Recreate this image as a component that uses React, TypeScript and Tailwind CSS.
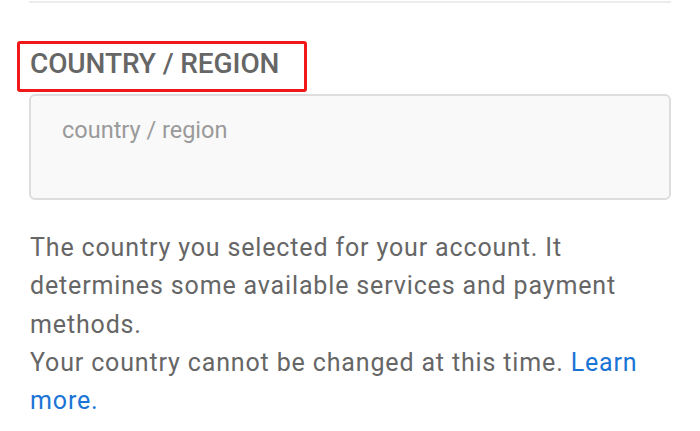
import React from 'react';

export default function App() {
  return (
    <div className="w-[700px] h-[431px] bg-white overflow-hidden" style={{ fontFamily: 'Roboto, "Liberation Sans", sans-serif' }}>
      <div className="mx-[29px] border-t-2 border-[#ececec] mt-[1px]" />
      <div className="ml-[17px] mt-[38px] w-[290px] h-[51px] border-[3px] border-[#f01818] rounded-[3px] pl-[10px] pt-[6px]">
        <h2 className="text-[28px] font-medium text-[#666666] leading-none tracking-[-0.1px]">COUNTRY / REGION</h2>
      </div>
      <div className="mx-[29px] mt-[2px] h-[106px] bg-[#f9f9f9] border-2 border-[#dddddd] rounded-[6px] pl-[31px] pt-[23px]">
        <span className="block text-[23.5px] leading-none text-[#9a9a9a]">country / region</span>
      </div>
      <div className="ml-[30px] w-[630px] mt-[29px] text-[25px] leading-[38.3px] tracking-[0.85px] text-[#666666]">
        <p>The country you selected for your account. It determines some available services and payment methods.</p>
        <p>
          Your country cannot be changed at this time.{' '}
          <a className="text-[#1a74d6]">
            <span>Learn</span> <span>more.</span>
          </a>
        </p>
      </div>
    </div>
  );
}
